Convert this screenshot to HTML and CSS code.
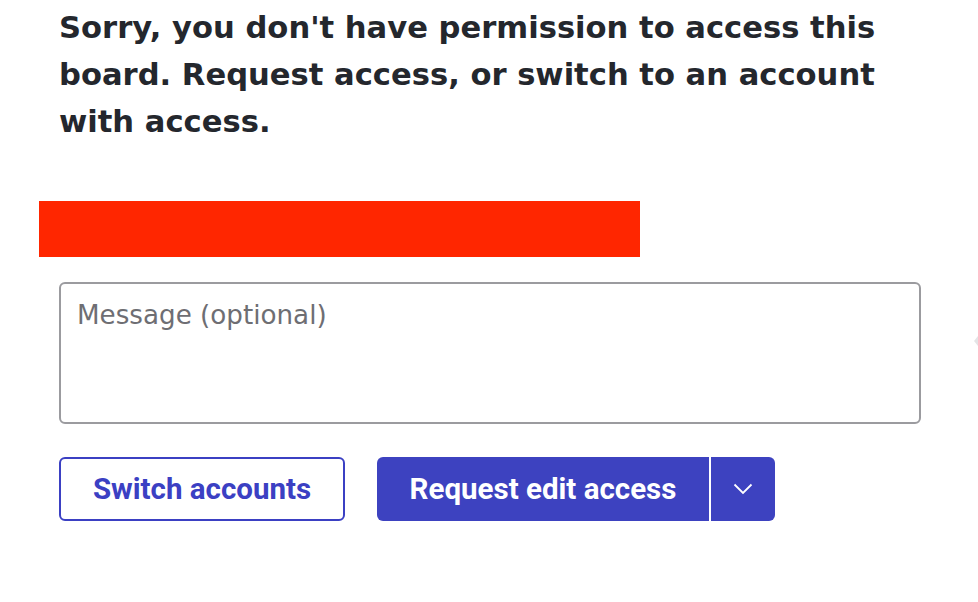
FILE: index.html
```html
<!DOCTYPE html>
<html>
<head>
<meta charset="utf-8">
<link rel="stylesheet" href="styles.css">
</head>
<body>
<div class="page">
  <h1 class="title">Sorry, you don't have permission to access this board. Request access, or switch to an account with access.</h1>
  <div class="redact"></div>
  <div class="form">
    <textarea class="message" placeholder="Message (optional)"></textarea>
    <div class="actions">
      <button class="btn btn-outline">Switch accounts</button>
      <div class="split">
        <button class="btn btn-primary">Request edit access</button>
        <button class="btn btn-drop" aria-label="More options">
          <svg width="20" height="12" viewBox="0 0 20 12"><path d="M1.5 1.5 L10 10 L18.5 1.5" fill="none" stroke="#fff" stroke-width="1.8"/></svg>
        </button>
      </div>
    </div>
  </div>
  <div class="edge"></div>
</div>
</body>
</html>
```
FILE: styles.css
```css
html, body { margin: 0; padding: 0; background: #fff; }
.page {
  position: relative;
  width: 978px;
  height: 602px;
  overflow: hidden;
  padding: 0 0 0 39px;
  box-sizing: border-box;
}
.title {
  margin: 0;
  padding: 4px 0 0 20px;
  width: 860px;
  font-family: "DejaVu Sans", sans-serif;
  font-weight: 700;
  font-size: 30.6px;
  line-height: 47px;
  color: #24272d;
}
.redact {
  margin-top: 56px;
  width: 601px;
  height: 56px;
  background: #ff2600;
}
.form { padding-left: 20px; }
.message {
  display: block;
  margin-top: 25px;
  width: 862px;
  height: 142px;
  box-sizing: border-box;
  border: 2px solid #9b9b9f;
  border-radius: 6px;
  padding: 15px 16px;
  resize: none;
  font-family: "DejaVu Sans", sans-serif;
  font-size: 26.2px;
  line-height: 32px;
  color: #24272d;
}
.message::placeholder { color: #6e6e73; }
.actions {
  display: flex;
  gap: 32px;
  margin-top: 33px;
}
.btn {
  height: 64px;
  box-sizing: border-box;
  font-family: Roboto, sans-serif;
  font-weight: 700;
  font-size: 29.5px;
  border-radius: 6px;
  cursor: pointer;
  padding: 0;
}
.btn-outline {
  width: 286px;
  background: #fff;
  color: #3b40c3;
  border: 2px solid #3b40c3;
}
.split { display: flex; gap: 2px; }
.btn-primary {
  width: 332px;
  background: #3d42c0;
  color: #fff;
  border: none;
  border-radius: 6px 0 0 6px;
}
.btn-drop {
  width: 64px;
  background: #3d42c0;
  border: none;
  border-radius: 0 6px 6px 0;
  display: flex;
  align-items: center;
  justify-content: center;
}
.edge {
  position: absolute;
  right: 0;
  top: 336px;
  width: 0;
  height: 0;
  border-top: 5px solid transparent;
  border-bottom: 5px solid transparent;
  border-right: 4px solid #e4e4e6;
}
```
